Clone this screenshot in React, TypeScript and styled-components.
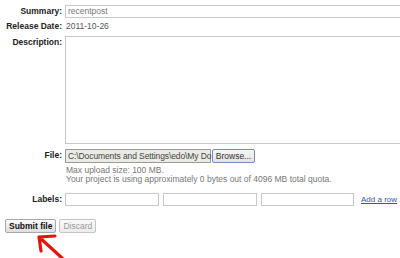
import React from "react";
import styled, { createGlobalStyle } from "styled-components";

const Global = createGlobalStyle`
  html, body { margin: 0; padding: 0; background: #fff; overflow: hidden; }
  body { font-family: "Liberation Sans", Arial, sans-serif; font-size: 8.5px; color: #555; }
`;

const Page = styled.div`
  width: 400px;
  height: 258px;
  position: relative;
  overflow: hidden;
  padding-top: 5px;
  box-sizing: border-box;
`;

const Form = styled.div`
  display: grid;
  grid-template-columns: 62px 1fr;
  column-gap: 3px;
  align-items: start;
`;

const Label = styled.div<{ $mt?: number }>`
  text-align: right;
  font-weight: bold;
  color: #222;
  margin-top: ${(p) => p.$mt ?? 0}px;
  line-height: 13px;
  white-space: nowrap;
`;

const Cell = styled.div<{ $mt?: number }>`
  margin-top: ${(p) => p.$mt ?? 0}px;
  min-width: 0;
`;

const TextInput = styled.div<{ $w?: string }>`
  box-sizing: border-box;
  width: ${(p) => p.$w ?? "360px"};
  height: 13px;
  border: 1px solid #c8c8c8;
  border-right-width: ${(p) => (p.$w ? "1px" : "0")};
  background: #fff;
  color: #777;
  line-height: 11px;
  padding-left: 2px;
  white-space: nowrap;
  overflow: hidden;
`;

const Value = styled.div`
  line-height: 13px;
  color: #555;
  padding-left: 1px;
`;

const TextArea = styled.div`
  box-sizing: border-box;
  width: 360px;
  height: 108px;
  border: 1px solid #c8c8c8;
  border-right: 0;
  background: #fff;
`;

const FileRow = styled.div`
  display: flex;
  align-items: stretch;
  height: 14px;
`;

const FileField = styled.div`
  box-sizing: border-box;
  width: 146px;
  border: 1px solid #9a9a9a;
  background: #ebebe4;
  color: #444;
  line-height: 12px;
  padding-left: 2px;
  white-space: nowrap;
  letter-spacing: -0.1px;
`;

const BrowseButton = styled.div`
  box-sizing: border-box;
  width: 43px;
  margin-left: 1px;
  border: 1px solid #6f8fc0;
  border-radius: 2px;
  background: linear-gradient(#f6f6f6, #e2e2e2);
  color: #333;
  line-height: 12px;
  text-align: center;
`;

const Notes = styled.div`
  margin-top: 3px;
  color: #777;
  line-height: 9px;
  padding-left: 1px;
  white-space: nowrap;
`;

const LabelsRow = styled.div`
  display: flex;
  align-items: center;
  gap: 4px;
`;

const AddLink = styled.a`
  color: #3355bb;
  text-decoration: underline;
  margin-left: 3px;
  font-size: 8px;
  white-space: nowrap;
`;

const Buttons = styled.div`
  display: flex;
  gap: 3px;
  padding-left: 5px;
  margin-top: 13px;
`;

const Button = styled.div<{ $primary?: boolean }>`
  box-sizing: border-box;
  height: 14px;
  padding: 0 3px;
  border: 1px solid ${(p) => (p.$primary ? "#a8a8a8" : "#c4c4c4")};
  border-radius: 2px;
  background: ${(p) => (p.$primary ? "linear-gradient(#fafafa, #dedede)" : "linear-gradient(#fbfbfb, #ececec)")};
  color: ${(p) => (p.$primary ? "#111" : "#9a9a9a")};
  font-weight: ${(p) => (p.$primary ? "bold" : "normal")};
  line-height: 12px;
  white-space: nowrap;
`;

const Arrow = styled.svg`
  position: absolute;
  left: 30px;
  top: 230px;
`;

export default function App() {
  return (
    <>
      <Global />
      <Page>
        <Form>
          <Label>Summary:</Label>
          <Cell>
            <TextInput>recentpost</TextInput>
          </Cell>

          <Label $mt={2}>Release Date:</Label>
          <Cell $mt={2}>
            <Value>2011-10-26</Value>
          </Cell>

          <Label $mt={3}>Description:</Label>
          <Cell $mt={3}>
            <TextArea />
          </Cell>

          <Label $mt={5}>File:</Label>
          <Cell $mt={5}>
            <FileRow>
              <FileField>C:\Documents and Settings\edo\My Do</FileField>
              <BrowseButton>Browse...</BrowseButton>
            </FileRow>
            <Notes>
              Max upload size: 100 MB.
              <br />
              Your project is using approximately 0 bytes out of 4096 MB total quota.
            </Notes>
          </Cell>

          <Label $mt={9}>Labels:</Label>
          <Cell $mt={9}>
            <LabelsRow>
              <TextInput $w="94px" />
              <TextInput $w="94px" />
              <TextInput $w="93px" />
              <AddLink href="#">Add a row</AddLink>
            </LabelsRow>
          </Cell>
        </Form>

        <Buttons>
          <Button $primary>Submit file</Button>
          <Button>Discard</Button>
        </Buttons>

        <Arrow width="40" height="30" viewBox="0 0 40 30">
          <path
            d="M9 7 L32 28 M9 7 L25 6 M9 7 L11 21"
            stroke="#e8120c"
            strokeWidth="3.2"
            strokeLinecap="round"
            strokeLinejoin="round"
            fill="none"
          />
        </Arrow>
      </Page>
    </>
  );
}
